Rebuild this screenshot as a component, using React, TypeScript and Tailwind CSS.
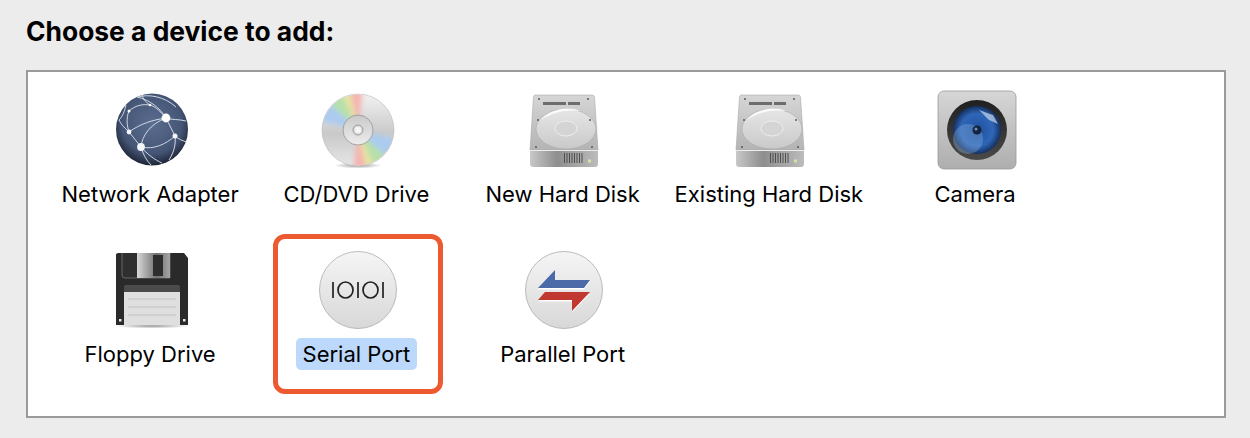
const Globe = () => (
  <svg viewBox="0 0 80 80" className="h-20 w-20">
    <defs>
      <radialGradient id="gl" cx="50%" cy="42%" r="58%">
        <stop offset="0" stopColor="#5b6d90" />
        <stop offset="0.72" stopColor="#455575" />
        <stop offset="1" stopColor="#1d2536" />
      </radialGradient>
    </defs>
    <circle cx="40" cy="39.500" r="36" fill="url(#gl)" />
    <g fill="none" stroke="#dfe5ef" strokeWidth="0.9">
      <path d="M7 30C10 36 13 38 17 42C22 48 25 52 29 57C35 64 43 70 50 73" />
      <path d="M29 57C30 46 38 34 54 28" />
      <path d="M17 42C28 34 40 30 54 28" />
      <path d="M54 28L63 46C66 49 71 51 75 52" />
      <path d="M29 57C42 60 54 54 63 46" />
      <path d="M63 46C64 54 62 62 57 70" />
      <path d="M54 28C48 18 38 10 25 7" />
      <path d="M17 21C24 15 31 14 38 15C44 17 49 22 54 28C60 30 66 29 74 31" />
      <path d="M29 57C31 64 34 70 39 75" />
      <path d="M17 21C14 28 15 36 17 42" />
      <path d="M38 15C33 12 31 8 30 5" />
      <path d="M26 7C36 4 52 6 64 17" />
      <path d="M14 15C12 24 9 28 7 30" />
    </g>
    <circle cx="54" cy="28" r="4.400" fill="#fff" />
    <circle cx="29" cy="57" r="3.900" fill="#f4f6fa" />
    <circle cx="17" cy="42" r="2.400" fill="#f4f6fa" />
    <circle cx="63" cy="46" r="2.500" fill="#f4f6fa" />
    <circle cx="17" cy="21" r="1.500" fill="#fff" />
    <circle cx="38" cy="15" r="1.300" fill="#fff" />
  </svg>
)

const Disc = () => (
  <svg viewBox="0 0 80 80" className="h-20 w-20">
    <defs>
      <linearGradient id="cd" x1="0" y1="0" x2="0" y2="1">
        <stop offset="0" stopColor="#f2f2f2" />
        <stop offset="0.55" stopColor="#c9c9c9" />
        <stop offset="1" stopColor="#e6e6e6" />
      </linearGradient>
      <clipPath id="cdclip">
        <circle cx="40" cy="40" r="35.500" />
      </clipPath>
      <filter id="cdblur" x="-20%" y="-20%" width="140%" height="140%">
        <feGaussianBlur stdDeviation="2.500" />
      </filter>
      <radialGradient id="cdshadow">
        <stop offset="0" stopColor="#000" stopOpacity="0.4" />
        <stop offset="1" stopColor="#000" stopOpacity="0" />
      </radialGradient>
      <linearGradient id="cdhub" x1="0" y1="0" x2="0" y2="1">
        <stop offset="0" stopColor="#c9c9c9" />
        <stop offset="1" stopColor="#ededed" />
      </linearGradient>
    </defs>
    <ellipse cx="40" cy="75.500" rx="24" ry="3" fill="url(#cdshadow)" />
    <circle cx="40" cy="40" r="36" fill="url(#cd)" stroke="#b9b9b9" strokeWidth="0.6" />
    <g clipPath="url(#cdclip)">
      <g filter="url(#cdblur)">
        <path d="M40 40L46 -10L30 -10Z" fill="#f4b4b0" />
        <path d="M40 40L30 -10L19 -6Z" fill="#e6e2a2" />
        <path d="M40 40L19 -6L4 6Z" fill="#b6e0aa" />
        <path d="M40 40L4 6L-10 28Z" fill="#abcbf0" />
        <g transform="rotate(180 40 40)">
          <path d="M40 40L46 -10L30 -10Z" fill="#f4b4b0" />
          <path d="M40 40L30 -10L19 -6Z" fill="#e6e2a2" />
          <path d="M40 40L19 -6L4 6Z" fill="#b6e0aa" />
          <path d="M40 40L4 6L-10 28Z" fill="#abcbf0" />
        </g>
      </g>
    </g>
    <circle cx="40" cy="40" r="15" fill="url(#cdhub)" stroke="#8d8d8d" strokeWidth="0.7" />
    <circle cx="40" cy="40" r="5" fill="#dddddd" stroke="#8a8a8a" strokeWidth="0.8" />
    <circle cx="40" cy="40" r="3" fill="#f6f6f6" />
  </svg>
)

const HardDisk = ({ id }: { id: string }) => (
  <svg viewBox="0 0 80 80" className="h-20 w-20">
    <defs>
      <linearGradient id={`${id}body`} x1="0" y1="0" x2="0" y2="1">
        <stop offset="0" stopColor="#d6d6d6" />
        <stop offset="1" stopColor="#b4b4b4" />
      </linearGradient>
      <linearGradient id={`${id}plat`} x1="0" y1="0" x2="0" y2="1">
        <stop offset="0" stopColor="#e6e6e6" />
        <stop offset="1" stopColor="#c9c9c9" />
      </linearGradient>
      <linearGradient id={`${id}front`} x1="0" y1="0" x2="1" y2="0">
        <stop offset="0" stopColor="#c8c8c8" />
        <stop offset="0.4" stopColor="#8e8e8e" />
        <stop offset="1" stopColor="#bcbcbc" />
      </linearGradient>
    </defs>
    <path d="M11 5H68Q70 5 70.500 7L74 60H6L9.500 7Q10 5 11 5Z" fill={`url(#${id}body)`} stroke="#a8a8a8" strokeWidth="0.6" />
    <path d="M6 60H74V74Q74 77 71 77H9Q6 77 6 74Z" fill={`url(#${id}front)`} />
    <path d="M6 60.500H74" stroke="#ececec" strokeWidth="1" />
    <rect x="19" y="12" width="23" height="3" fill="#6d6d6d" />
    <rect x="44" y="12" width="12" height="3" fill="#6d6d6d" />
    <ellipse cx="42" cy="39" rx="30" ry="20" fill={`url(#${id}plat)`} stroke="#a0a0a0" strokeWidth="0.5" />
    <path d="M17 30C24 21 42 15 56 21C44 19 28 22 17 30Z" fill="#fafafa" />
    <ellipse cx="42" cy="38.500" rx="11" ry="7.500" fill="#d4d4d4" stroke="#f3f3f3" strokeWidth="0.8" />
    <circle cx="15" cy="9" r="1" fill="#5a5a5a" />
    <circle cx="64" cy="9" r="1" fill="#5a5a5a" />
    <circle cx="14" cy="30" r="1" fill="#5a5a5a" />
    <circle cx="66" cy="30" r="1" fill="#5a5a5a" />
    <circle cx="12" cy="57" r="1" fill="#5a5a5a" />
    <circle cx="68" cy="57" r="1" fill="#5a5a5a" />
    <path d="M40.500 63V73M43 63V73M45.500 63V73M48 63V73M50.500 63V73M53 63V73M55.500 63V73M58 63V73" stroke="#4f4f4f" strokeWidth="1" />
    <rect x="64" y="69.500" width="3" height="3" fill="#cfe7a6" />
  </svg>
)

const Camera = () => (
  <svg viewBox="0 0 80 80" className="h-20 w-20">
    <defs>
      <linearGradient id="cambody" x1="0" y1="0" x2="0" y2="1">
        <stop offset="0" stopColor="#d6d6d6" />
        <stop offset="1" stopColor="#aeaeae" />
      </linearGradient>
      <radialGradient id="lens" cx="50%" cy="50%" r="52%">
        <stop offset="0" stopColor="#1f4f9c" />
        <stop offset="0.65" stopColor="#2f66b8" />
        <stop offset="1" stopColor="#102a55" />
      </radialGradient>
      <linearGradient id="lensring" x1="0" y1="0" x2="0" y2="1">
        <stop offset="0" stopColor="#1f1f1f" />
        <stop offset="1" stopColor="#4a4a4a" />
      </linearGradient>
    </defs>
    <rect x="1" y="1" width="78" height="78" rx="6" fill="url(#cambody)" stroke="#9a9a9a" strokeWidth="0.8" />
    <circle cx="40" cy="40" r="30" fill="url(#lensring)" />
    <circle cx="40" cy="40" r="24" fill="url(#lens)" />
    <circle cx="31" cy="49" r="15" fill="#8db4e0" opacity="0.35" />
    <path d="M42 20L56 25L61 34L52 30Z" fill="#c6d7ee" opacity="0.7" />
    <circle cx="40" cy="40" r="4.500" fill="#14243f" />
    <circle cx="39" cy="39" r="1.500" fill="#6f8fbf" />
  </svg>
)

const Floppy = () => (
  <svg viewBox="0 0 80 80" className="h-20 w-20">
    <defs>
      <linearGradient id="shutter" x1="0" y1="0" x2="1" y2="0">
        <stop offset="0" stopColor="#d8d8d8" />
        <stop offset="0.6" stopColor="#6f6f6f" />
        <stop offset="1" stopColor="#a5a5a5" />
      </linearGradient>
      <linearGradient id="label" x1="0" y1="0" x2="0" y2="1">
        <stop offset="0" stopColor="#4c4c4c" />
        <stop offset="1" stopColor="#3a3a3a" />
      </linearGradient>
      <radialGradient id="floppyshadow">
        <stop offset="0" stopColor="#000" stopOpacity="0.4" />
        <stop offset="1" stopColor="#000" stopOpacity="0" />
      </radialGradient>
    </defs>
    <ellipse cx="40" cy="76" rx="38" ry="2.500" fill="url(#floppyshadow)" />
    <path d="M4 4L6 3H72L76 8V75H4Z" fill="#2a2a2a" />
    <path d="M10 3V25Q10 28 13 28H58V3" fill="#2f2f2f" stroke="#8f8f8f" strokeWidth="0.6" />
    <rect x="25" y="3" width="33" height="25" fill="url(#shutter)" />
    <rect x="41" y="5" width="10" height="21" fill="#2d2d2d" />
    <path d="M12 37Q12 35 14 35H66Q68 35 68 37V75H12Z" fill="url(#label)" />
    <rect x="12" y="42" width="56" height="33" fill="#dfdfdf" />
    <path d="M16 49H64M16 57H64M16 65H64" stroke="#b0b0b0" strokeWidth="0.6" />
    <rect x="7" y="69" width="2.500" height="2.500" fill="#e8e8e8" />
    <rect x="71" y="69" width="2.500" height="2.500" fill="#e8e8e8" />
  </svg>
)

const RoundBase = ({ id }: { id: string }) => (
  <>
    <defs>
      <linearGradient id={id} x1="0" y1="0" x2="0" y2="1">
        <stop offset="0" stopColor="#f5f5f5" />
        <stop offset="1" stopColor="#d8d8d8" />
      </linearGradient>
    </defs>
    <circle cx="40" cy="40" r="38.500" fill={`url(#${id})`} stroke="#acacac" strokeWidth="0.8" />
  </>
)

const Serial = () => (
  <svg viewBox="0 0 80 80" className="h-20 w-20">
    <RoundBase id="serialbase" />
    <g fill="none" stroke="#222222" strokeWidth="1.700">
      <path d="M15 32V48M65 32V48M40 32V48" />
      <ellipse cx="27.500" cy="40" rx="7.500" ry="8" />
      <ellipse cx="52.500" cy="40" rx="7.500" ry="8" />
    </g>
  </svg>
)

const Parallel = () => (
  <svg viewBox="0 0 80 80" className="h-20 w-20">
    <RoundBase id="parallelbase" />
    <path d="M14 38L31 20V30H66L60 38Z" fill="#fff" transform="translate(0 1.500)" />
    <path d="M14 38L31 20V30H66L60 38Z" fill="#4a6aa8" />
    <path d="M14 50L21 42H66L48 61V50Z" fill="#fff" transform="translate(0 1.500)" />
    <path d="M14 50L21 42H66L48 61V50Z" fill="#c0382f" />
  </svg>
)

const row1 = [
  { label: 'Network Adapter', icon: <Globe /> },
  { label: 'CD/DVD Drive', icon: <Disc /> },
  { label: 'New Hard Disk', icon: <HardDisk id="hdnew" /> },
  { label: 'Existing Hard Disk', icon: <HardDisk id="hdold" /> },
  { label: 'Camera', icon: <Camera /> },
]

const row2 = [
  { label: 'Floppy Drive', icon: <Floppy /> },
  { label: 'Serial Port', icon: <Serial />, selected: true },
  { label: 'Parallel Port', icon: <Parallel /> },
]

function Device({
  label,
  icon,
  selected,
}: {
  label: string
  icon: React.ReactNode
  selected?: boolean
}) {
  return (
    <div className="relative flex flex-col items-center gap-2">
      {selected && (
        <div className="absolute -top-4 left-[20px] h-[160px] w-[170px] rounded-[12px] border-[5px] border-[#ee5a2f]" />
      )}
      <div className="ml-[3px]">{icon}</div>
      <span
        className={`h-8 whitespace-nowrap rounded-[5px] px-[7px] text-[22px] leading-8 text-black ${
          selected ? 'bg-[#bcd8fb]' : ''
        }`}
      >
        {label}
      </span>
    </div>
  )
}

export default function App() {
  return (
    <div className="h-[438px] w-[1250px] bg-[#ececec] px-6 pb-5 pt-3 font-['Inter',sans-serif]">
      <h1 className="ml-[2px] h-[38px] text-[26.400px] font-bold leading-[38px] text-black">
        Choose a device to add:
      </h1>
      <div className="ml-[2px] mt-5 h-[348px] w-[1200px] border-2 border-[#9b9b9b] bg-white pl-[19px] pt-[18px]">
        <div className="grid grid-cols-[repeat(5,206.25px)] gap-y-10">
          {row1.map((d) => (
            <Device key={d.label} label={d.label} icon={d.icon} />
          ))}
          {row2.map((d) => (
            <Device key={d.label} label={d.label} icon={d.icon} selected={d.selected} />
          ))}
        </div>
      </div>
    </div>
  )
}
